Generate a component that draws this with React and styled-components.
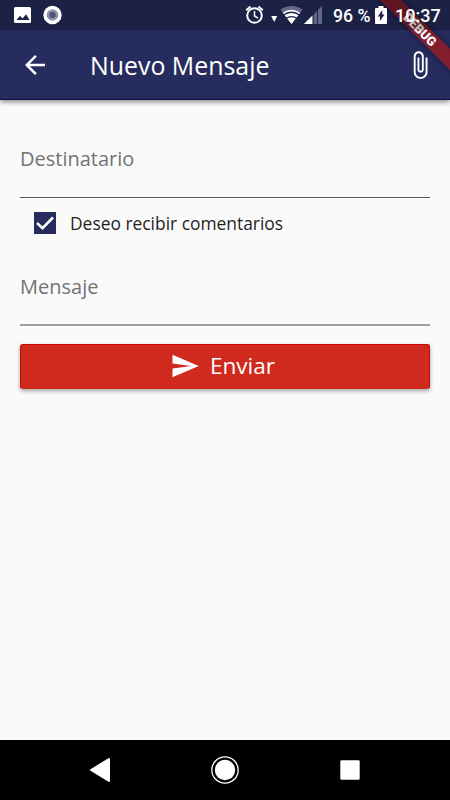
import React from 'react'
import styled, { createGlobalStyle } from 'styled-components'

const GlobalStyle = createGlobalStyle`
  * {
    box-sizing: border-box;
  }

  body {
    margin: 0;
    background: #fafafa;
  }
`

const Screen = styled.div`
  position: relative;
  display: flex;
  flex-direction: column;
  width: 450px;
  height: 800px;
  overflow: hidden;
  background: #fafafa;
  font-family: 'Open Sans', sans-serif;
`

const Header = styled.header`
  flex: none;
  background: #262d5e;
  border-bottom: 1px solid #0b0e48;
  box-shadow: 0 2px 5px rgba(0, 0, 0, 0.45);
  color: #fff;
`

// translucent, so the debug ribbon shows through under the clock
const StatusBar = styled.div`
  position: relative;
  z-index: 2;
  display: flex;
  align-items: center;
  justify-content: space-between;
  height: 30px;
  padding: 0 10px 0 12px;
  background: rgba(0, 0, 0, 0.25);
  font-family: Roboto, sans-serif;
  font-size: 18px;
  font-weight: 500;
`

const StatusGroup = styled.div`
  display: flex;
  align-items: center;
  height: 30px;

  svg {
    display: block;
  }
`

const Battery = styled.span`
  width: 37px;
  margin-left: 9px;
  padding-top: 2px;
  font-size: 17.7px;
  line-height: 30px;
  white-space: nowrap;
`

const BatteryIcon = styled.svg`
  margin-left: 5px;
`

const Clock = styled.span`
  width: 45px;
  margin-left: 8px;
  padding-top: 2px;
  line-height: 30px;
  white-space: nowrap;
`

const AppBar = styled.div`
  display: flex;
  align-items: center;
  height: 69px;
  padding: 0 15px 0 20px;
`

const Title = styled.h1`
  flex: 1;
  margin: 0 0 0 40px;
  font-size: 24.9px;
  font-weight: 400;
  line-height: 34px;
  white-space: nowrap;
`

const Form = styled.main`
  display: flex;
  flex-direction: column;
  flex: 1;
  padding: 45px 20px 0;
`

const Field = styled.label`
  height: 53px;
  border-bottom: ${props => props.$line};
  color: #737373;
  font-size: 20px;
  line-height: 28px;
`

const CheckRow = styled.div`
  display: flex;
  align-items: center;
  height: 50px;
  margin-bottom: 25px;
  padding-left: 14px;
  color: #1f1f1f;
  font-size: 17.4px;
  white-space: nowrap;
`

const Checkbox = styled.span`
  width: 22px;
  height: 22px;
  margin-right: 14px;
  background: #262d5e;

  svg {
    display: block;
  }
`

const SendButton = styled.button`
  display: flex;
  align-items: center;
  justify-content: center;
  height: 45px;
  margin: 18px 0 0;
  padding: 0 5px 1px 0;
  border: 1px solid #c90808;
  border-bottom-color: #d02a1e;
  border-radius: 3px;
  background: #d02a1e;
  box-shadow: 0 2px 4px rgba(0, 0, 0, 0.35);
  color: #fff;
  font-family: inherit;
  font-size: 22.6px;
  line-height: 30px;

  svg {
    margin-right: 10px;
  }
`

const NavBar = styled.nav`
  display: flex;
  align-items: center;
  justify-content: space-between;
  flex: none;
  height: 60px;
  padding: 0 85px;
  background: #000;
`

const DebugBanner = styled.div`
  position: absolute;
  z-index: 1;
  top: 22px;
  right: -45px;
  width: 150px;
  height: 15px;
  transform: rotate(45deg);
  background: rgba(160, 24, 28, 0.75);
  box-shadow: 0 0 6px rgba(0, 0, 0, 0.5);
  color: #fff;
  font-family: Roboto, sans-serif;
  font-size: 12.75px;
  font-weight: 900;
  line-height: 15px;
  text-align: center;
`

const Icon = ({ size = 30, children }) => (
  <svg width={size} height={size} viewBox="0 0 24 24" fill="currentColor">
    {children}
  </svg>
)

const App = () => {
  return (
    <Screen>
      <GlobalStyle />
      <Header>
        <StatusBar>
          <StatusGroup>
            <svg width="50" height="30" viewBox="0 0 50 30">
              <rect x="2" y="7" width="17" height="16" rx="1.5" fill="#fff" />
              <path d="M4.5 20l3.5-4.2 2.5 2.8 3.6-4.3 3.4 5.7z" fill="#1d2147" />
              <circle cx="40.5" cy="15" r="9.2" fill="#fff" />
              <circle cx="40.5" cy="15" r="5.8" fill="#8e93ac" />
              <circle cx="40.5" cy="15" r="3.2" fill="#50577c" />
            </svg>
          </StatusGroup>
          <StatusGroup>
            <svg width="80" height="30" viewBox="0 0 80 30">
              <g fill="none" stroke="#fff" strokeWidth="2">
                <circle cx="10.5" cy="15.5" r="7.3" />
                <path d="M2.2 10.2l4.3-3.7M18.8 10.2l-4.3-3.7" />
                <path d="M10.5 11v5l3.5 2.2" strokeWidth="1.5" />
              </g>
              <path d="M27.2 16h6L30.2 22z" fill="#fff" />
              <path d="M47.5 24L36.5 9.7a18 18 0 0 1 22 0z" fill="#62678a" />
              <path d="M47.5 24L38.8 12.7a14.5 14.5 0 0 1 17.4 0z" fill="#fff" />
              <path d="M39.5 15a13 13 0 0 1 16 0M41.9 18.5a9 9 0 0 1 11.2 0" fill="none" stroke="#1d2147" strokeWidth="1.3" />
              <path d="M60 24L78 6v18z" fill="#62678a" />
              <path d="M60 24l8.5-8.5V24z" fill="#fff" />
              <path d="M69.2 10v14M73.4 8v16" stroke="#1d2147" strokeWidth="1" />
            </svg>
            <Battery>96 %</Battery>
            <BatteryIcon width="12" height="30" viewBox="0 0 12 30">
              <path d="M3.5 6h5v2H11a1 1 0 0 1 1 1v14a1 1 0 0 1-1 1H1a1 1 0 0 1-1-1V9a1 1 0 0 1 1-1h2.5z" fill="#fff" />
              <path d="M7.3 10v4.5h2.2L5 21v-4.6H2.8z" fill="#1d2147" />
            </BatteryIcon>
            <Clock>10:37</Clock>
          </StatusGroup>
        </StatusBar>

        <AppBar>
          <Icon>
            <path d="M20 11H7.83l5.59-5.59L12 4l-8 8 8 8 1.41-1.41L7.83 13H20v-2z" />
          </Icon>
          <Title>Nuevo Mensaje</Title>
          <Icon>
            <path d="M16.5 6v11.5c0 2.21-1.79 4-4 4s-4-1.79-4-4V5c0-1.38 1.12-2.5 2.5-2.5s2.5 1.12 2.5 2.5v10.5c0 .55-.45 1-1 1s-1-.45-1-1V6H10v9.5c0 1.38 1.12 2.5 2.5 2.5s2.5-1.12 2.5-2.5V5c0-2.21-1.79-4-4-4S7 2.79 7 5v12.5c0 3.04 2.46 5.5 5.5 5.5s5.5-2.46 5.5-5.5V6h-1.5z" />
          </Icon>
        </AppBar>
      </Header>

      <Form>
        <Field $line="1px solid #595959">Destinatario</Field>
        <CheckRow>
          <Checkbox>
            <svg width="22" height="22" viewBox="0 0 22 22">
              <path d="M3 11l5.5 5.2L19 5.5" fill="none" stroke="#fff" strokeWidth="2.5" />
            </svg>
          </Checkbox>
          Deseo recibir comentarios
        </CheckRow>
        <Field $line="2px solid #a0a0a0">Mensaje</Field>
        <SendButton type="button">
          <Icon>
            <path d="M2.01 21L23 12 2.01 3 2 10l15 2-15 2z" />
          </Icon>
          Enviar
        </SendButton>
      </Form>

      <NavBar>
        <svg width="30" height="30" viewBox="0 0 30 30">
          <path d="M6 15L24 4v22z" fill="#fff" stroke="#fff" strokeWidth="2" strokeLinejoin="round" />
        </svg>
        <svg width="30" height="30" viewBox="0 0 30 30">
          <circle cx="15" cy="15" r="13.2" fill="none" stroke="#fff" strokeWidth="1.3" />
          <circle cx="15" cy="15" r="10.2" fill="#fff" />
        </svg>
        <svg width="30" height="30" viewBox="0 0 30 30">
          <rect x="5.3" y="5.3" width="19.4" height="19.4" rx="1.2" fill="#fff" />
        </svg>
      </NavBar>

      <DebugBanner>DEBUG</DebugBanner>
    </Screen>
  )
}

export default App
